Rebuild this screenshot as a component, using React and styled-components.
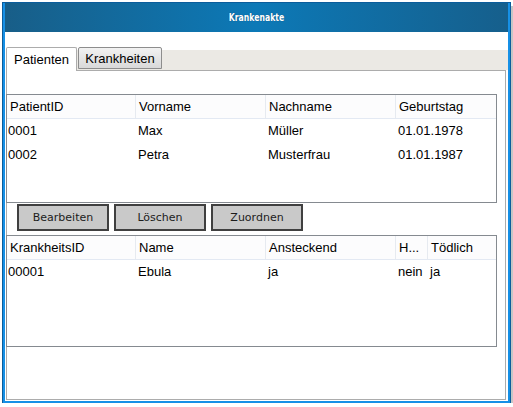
import React from "react";
import styled, { createGlobalStyle } from "styled-components";

const GlobalStyle = createGlobalStyle`
  html, body {
    margin: 0;
    padding: 0;
    background: #ffffff;
  }
  body {
    font-family: "Liberation Sans", Arial, sans-serif;
  }
`;

const Window = styled.div`
  margin: 3px 0 0 3px;
  width: 503px;
  height: 398px;
  display: flex;
  flex-direction: column;
  background: #ffffff;
  border: 2px solid #1690e6;
  border-top: 0;
  outline: 1px solid #0b5d9c;
  box-shadow: 3px 3px 0 #c6c6c6;
`;

const TitleBar = styled.div`
  height: 29px;
  flex: none;
  display: flex;
  align-items: center;
  justify-content: center;
  background: linear-gradient(to right, #185e88, #0c79b7 50%, #165f8c);
`;

const Title = styled.span`
  display: inline-block;
  color: #ffffff;
  font-family: "DejaVu Sans Condensed", "Liberation Sans", sans-serif;
  font-weight: bold;
  font-size: 11px;
  transform: scaleX(0.78);
  text-shadow: 0 0 1px rgba(0, 40, 80, 0.6);
`;

const TabRow = styled.div`
  margin: 15px 0 0 1px;
  height: 23px;
  display: flex;
  align-items: flex-start;
  gap: 1px;
  background: linear-gradient(to bottom, #ffffff 3px, #ebe9e4 3px);
`;

const Tab = styled.div`
  position: relative;
  z-index: 1;
  box-sizing: border-box;
  width: ${(p) => p.$width}px;
  height: ${(p) => (p.$active ? 24 : 22)}px;
  display: flex;
  align-items: center;
  justify-content: center;
  font-size: 13px;
  color: #000000;
  border: 1px solid ${(p) => (p.$active ? "#acacac" : "#8d8d8d")};
  border-bottom: ${(p) => (p.$active ? "0" : "1px solid #8d8d8d")};
  border-radius: 2px 2px 0 0;
  background: ${(p) =>
    p.$active ? "#ffffff" : "linear-gradient(to bottom, #f2f2f2, #d9d9d9)"};
  padding-bottom: ${(p) => (p.$active ? 1 : 0)}px;
`;

const Panel = styled.div`
  margin-left: 1px;
  box-sizing: border-box;
  width: 500px;
  height: 330px;
  border: 1px solid #acacac;
  display: flex;
  flex-direction: column;
`;

const Grid = styled.div`
  box-sizing: border-box;
  margin: ${(p) => p.$top}px 0 0 -1px;
  width: 491px;
  height: ${(p) => p.$height}px;
  border: 1px solid #858a90;
  display: grid;
  grid-template-columns: ${(p) => p.$cols};
  grid-auto-rows: 24px;
  align-content: start;
  font-size: 13px;
  color: #000000;
`;

const HeadCell = styled.div`
  height: 23px;
  display: flex;
  align-items: center;
  padding-left: 3px;
  background: #fcfcfd;
  border-bottom: 1px solid #e3e9f3;
  border-right: ${(p) => (p.$last ? "0" : "1px solid #e6eaf0")};
  white-space: nowrap;
  overflow: hidden;
`;

const Cell = styled.div`
  display: flex;
  align-items: center;
  padding-left: ${(p) => (p.$first ? 1 : 2)}px;
  padding-bottom: 1px;
  white-space: nowrap;
`;

const ButtonRow = styled.div`
  margin: 1px 0 0 10px;
  display: flex;
  gap: 5px;
`;

const Button = styled.button`
  box-sizing: border-box;
  width: 92px;
  height: 27px;
  padding: 0;
  background: #c9c9c9;
  border: 2px solid #404040;
  font-family: "DejaVu Sans", sans-serif;
  font-size: 11px;
  color: #1c1c1c;
`;

const patients = [
  ["0001", "Max", "Müller", "01.01.1978"],
  ["0002", "Petra", "Musterfrau", "01.01.1987"],
];

const diseases = [["00001", "Ebula", "ja", "nein", "ja"]];

function DataTable({ top, height, cols, headers, rows }) {
  return (
    <Grid $top={top} $height={height} $cols={cols}>
      {headers.map((h, i) => (
        <HeadCell key={h} $last={i === headers.length - 1}>
          {h}
        </HeadCell>
      ))}
      {rows.map((row) =>
        row.map((c, i) => (
          <Cell key={row[0] + i} $first={i === 0}>
            {c}
          </Cell>
        ))
      )}
    </Grid>
  );
}

export default function App() {
  return (
    <>
      <GlobalStyle />
      <Window>
        <TitleBar>
          <Title>Krankenakte</Title>
        </TitleBar>
        <TabRow>
          <Tab $active $width={71}>Patienten</Tab>
          <Tab $width={84}>Krankheiten</Tab>
        </TabRow>
        <Panel>
          <DataTable
            top={23}
            height={109}
            cols="129px 130px 130px 1fr"
            headers={["PatientID", "Vorname", "Nachname", "Geburtstag"]}
            rows={patients}
          />
          <ButtonRow>
            <Button>Bearbeiten</Button>
            <Button>Löschen</Button>
            <Button>Zuordnen</Button>
          </ButtonRow>
          <DataTable
            top={4}
            height={112}
            cols="129px 130px 130px 32px 1fr"
            headers={["KrankheitsID", "Name", "Ansteckend", "H...", "Tödlich"]}
            rows={diseases}
          />
        </Panel>
      </Window>
    </>
  );
}
